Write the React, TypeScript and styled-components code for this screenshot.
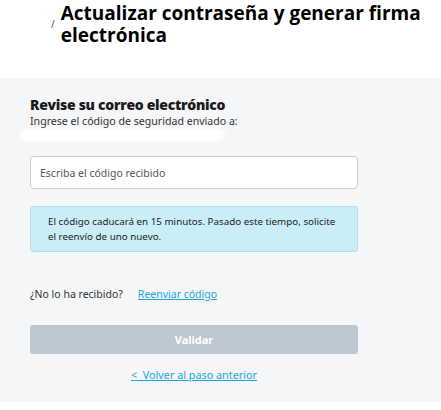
import styled, { createGlobalStyle } from 'styled-components';

const GlobalStyle = createGlobalStyle`
	body {
		margin: 0;
		background: #fff;
		font-family: 'Noto Sans', sans-serif;
	}
`;

const Header = styled.header`
	display: flex;
	align-items: flex-start;
	gap: 6px;
	height: 78px;
	padding: 2px 0 0 51px;
	box-sizing: border-box;
`;

const Crumb = styled.span`
	margin-top: 17px;
	font-size: 10px;
	line-height: 10px;
	color: #4a5a8a;
`;

const Title = styled.h1`
	margin: 0;
	font-family: 'Open Sans', sans-serif;
	font-weight: 700;
	font-size: 19px;
	line-height: 22px;
	color: #000;
`;

const Main = styled.main`
	background: #f5f6f8;
	height: 324px;
	padding: 18px 0 0 30px;
	box-sizing: border-box;
`;

const Panel = styled.div`
	width: 328px;
	display: flex;
	flex-direction: column;
`;

const Heading = styled.h2`
	margin: 0;
	font-family: 'Open Sans', sans-serif;
	font-weight: 800;
	font-size: 14px;
	line-height: 18px;
	letter-spacing: -0.3px;
	color: #1b1b1b;
`;

const Hint = styled.p`
	margin: 0;
	font-size: 10.6px;
	line-height: 14px;
	color: #333;
`;

const Redacted = styled.div`
	width: 205px;
	height: 12px;
	margin: 1px 0 0 -10px;
	background: #fff;
	border-radius: 6px;
	filter: blur(1.5px);
`;

const CodeInput = styled.input`
	margin-top: 15px;
	height: 33px;
	padding: 0 9px;
	border: 1px solid #ccc;
	border-radius: 4px;
	background: #fff;
	font-family: 'Noto Sans', sans-serif;
	font-size: 10.5px;
	color: #333;
	box-sizing: border-box;

	&::placeholder {
		color: #555;
	}
`;

const Notice = styled.div`
	margin-top: 17px;
	padding: 7px 16px 7px 17px;
	background: #c9eef8;
	border: 1px solid #b5dcf6;
	border-radius: 3px;
	font-size: 9.8px;
	line-height: 15px;
	color: #222;
`;

const ResendRow = styled.div`
	display: flex;
	gap: 15px;
	margin-top: 35px;
	font-size: 10.5px;
	color: #333;
`;

const TextLink = styled.a`
	color: #1aa7d9;
	text-decoration: underline;
	cursor: pointer;
`;

const SubmitButton = styled.button`
	margin-top: 24px;
	height: 29px;
	border: none;
	border-radius: 3px;
	background: #bdc7d1;
	color: #fff;
	font-family: 'Noto Sans', sans-serif;
	font-weight: 700;
	font-size: 11px;
`;

const BackLink = styled(TextLink)`
	align-self: center;
	margin-top: 13px;
	font-size: 10.8px;
`;

export default function App() {
	return (
		<>
			<GlobalStyle />
			<Header>
				<Crumb>/</Crumb>
				<Title>
					Actualizar contraseña y generar firma
					<br />
					electrónica
				</Title>
			</Header>
			<Main>
				<Panel>
					<Heading>Revise su correo electrónico</Heading>
					<Hint>Ingrese el código de seguridad enviado a:</Hint>
					<Redacted />
					<CodeInput placeholder="Escriba el código recibido" />
					<Notice>
						El código caducará en 15 minutos. Pasado este tiempo, solicite
						el reenvío de uno nuevo.
					</Notice>
					<ResendRow>
						<span>¿No lo ha recibido?</span>
						<TextLink>Reenviar código</TextLink>
					</ResendRow>
					<SubmitButton disabled>Validar</SubmitButton>
					<BackLink>&lt;&nbsp; Volver al paso anterior</BackLink>
				</Panel>
			</Main>
		</>
	);
}
